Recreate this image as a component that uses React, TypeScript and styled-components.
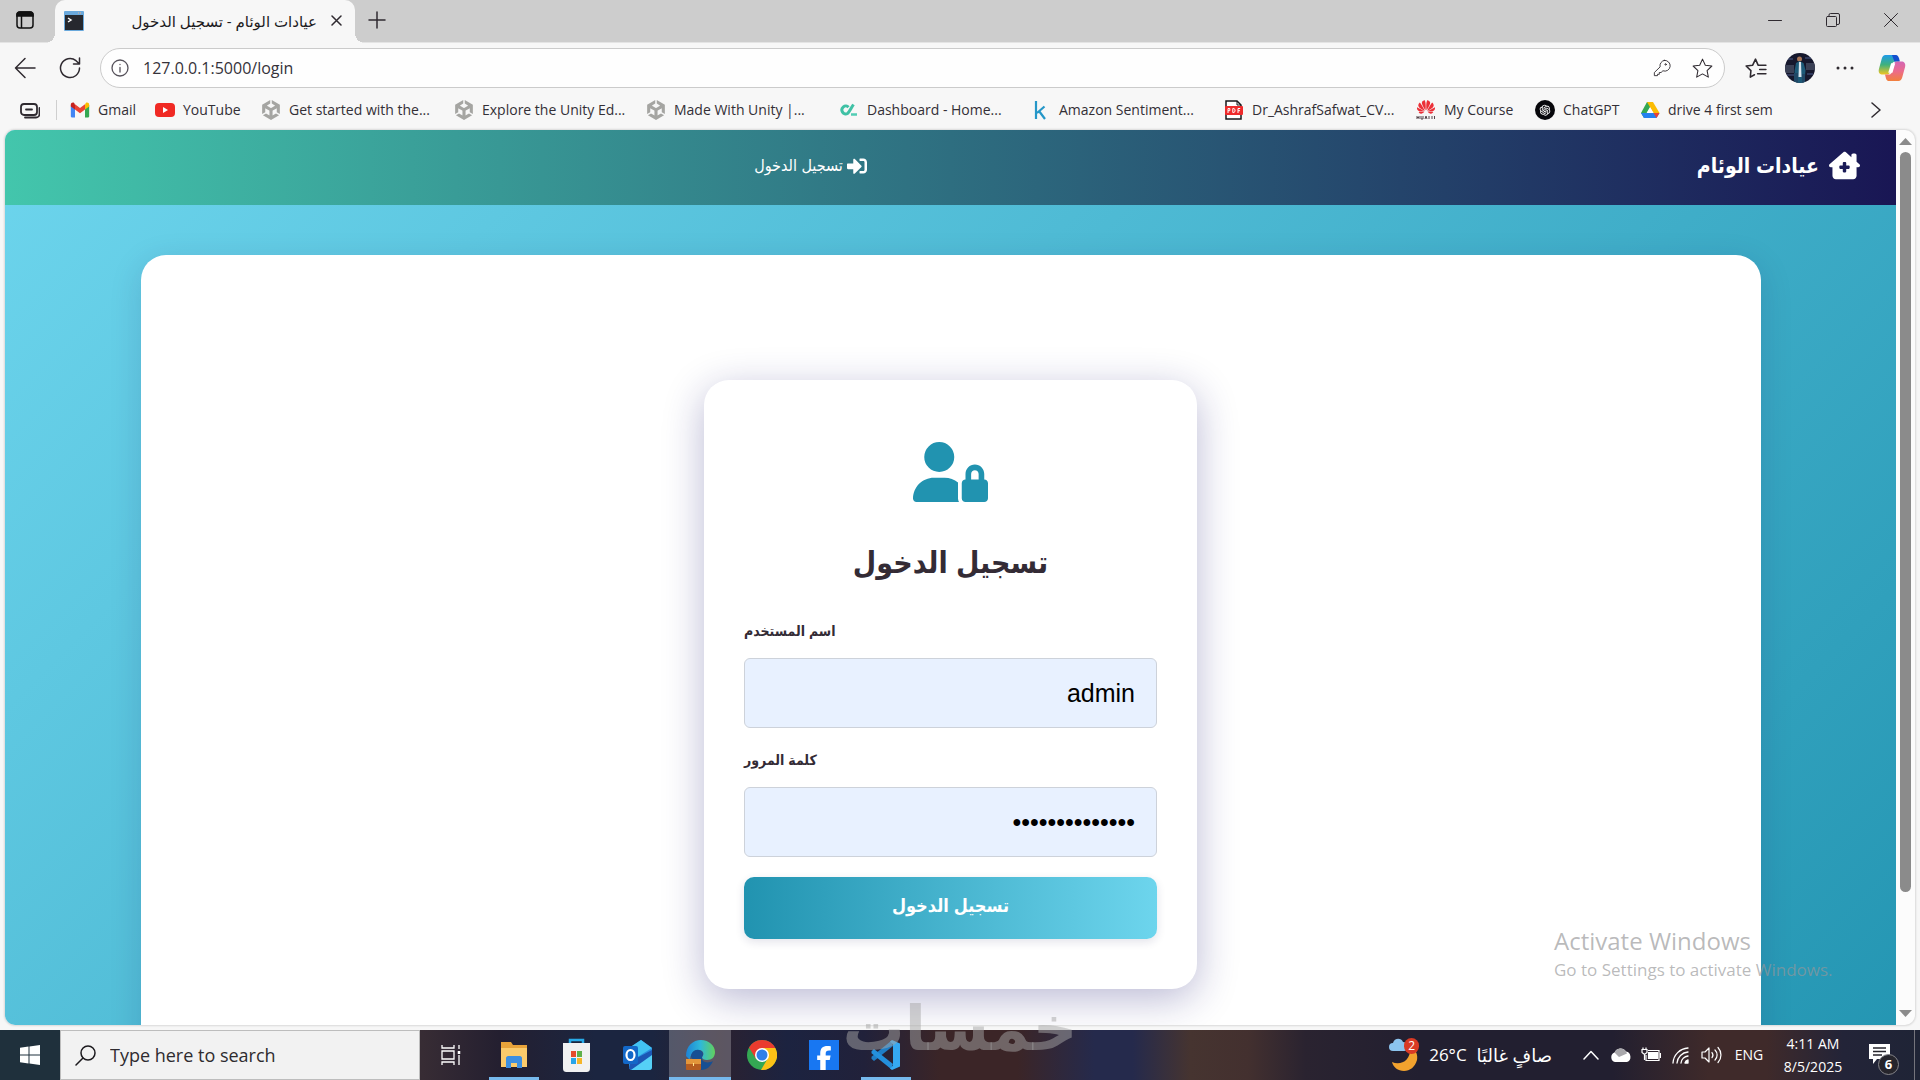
import React from 'react';
import styled, { createGlobalStyle, css } from 'styled-components';
import { FaUserLock, FaHouseChimneyMedical, FaFacebookF } from 'react-icons/fa6';
import { FaSignInAlt } from 'react-icons/fa';
import { SiUnity, SiHuawei } from 'react-icons/si';
import { AiOutlineOpenAI } from 'react-icons/ai';

const uiFont = '"Open Sans", "DejaVu Sans", sans-serif';
const pageFont = '"Liberation Sans", "DejaVu Sans Condensed", "DejaVu Sans", sans-serif';

const GlobalStyle = createGlobalStyle`
  *, *::before, *::after { box-sizing: border-box; }
  html, body { margin: 0; padding: 0; }
  body { overflow: hidden; background: #f7f7f7; font-family: ${uiFont}; }
  button, input { font: inherit; }
  svg { display: block; flex: none; }
`;

const Desktop = styled.div`
  position: relative;
  display: flex;
  flex-direction: column;
  height: 100vh;
  overflow: hidden;
  background: #f7f7f7;
`;

const IconButton = styled.button<{ $w?: number }>`
  display: flex;
  align-items: center;
  justify-content: center;
  flex: none;
  width: ${(p) => p.$w ?? 40}px;
  height: 40px;
  padding: 0;
  border: 0;
  background: transparent;
  color: #2f2a30;
`;

/* ---------- Tab strip ---------- */

const TabStrip = styled.header`
  display: flex;
  align-items: stretch;
  flex: none;
  height: 43px;
  padding-left: 5px;
  background: #cdcdcd;
  border-bottom: 1px solid #e4e4e4;
`;

const Tab = styled.div`
  position: relative;
  display: flex;
  align-items: center;
  width: 300px;
  height: 43px;
  margin-left: 10px;
  padding: 0 0 2px 9px;
  background: #f7f7f7;
  border-radius: 10px 10px 0 0;
  &::before, &::after {
    content: '';
    position: absolute;
    bottom: 0;
    width: 10px;
    height: 10px;
  }
  &::before { left: -10px; background: radial-gradient(circle at 0 0, transparent 10px, #f7f7f7 10px); }
  &::after { right: -10px; background: radial-gradient(circle at 100% 0, transparent 10px, #f7f7f7 10px); }
`;

const TabTitle = styled.span`
  flex: 1;
  font-size: 15px;
  line-height: 20px;
  text-align: right;
  white-space: nowrap;
  color: #1d1b1e;
`;

const WindowControls = styled.div`
  display: flex;
  margin-left: auto;
`;

/* ---------- Toolbar ---------- */

const Toolbar = styled.div`
  display: flex;
  align-items: center;
  flex: none;
  height: 50px;
  padding: 0 2px 0 5px;
`;

const AddressBar = styled.label`
  display: flex;
  align-items: center;
  flex: 1;
  height: 40px;
  margin: 0 9px 0 5px;
  padding: 0 2px 0 10px;
  border: 1px solid #cbcbcb;
  border-radius: 20px;
  background: #fefefe;
  color: #55515a;
`;

const AddressInput = styled.input`
  flex: 1;
  min-width: 0;
  margin-left: 14px;
  padding: 0;
  border: 0;
  outline: 0;
  background: transparent;
  font-size: 16px;
  line-height: 24px;
  color: #35323a;
`;

const Avatar = styled.span`
  display: block;
  width: 30px;
  height: 30px;
  border-radius: 50%;
  overflow: hidden;
`;

/* ---------- Bookmarks ---------- */

const BookmarkBar = styled.nav`
  display: flex;
  align-items: center;
  flex: none;
  height: 37px;
  padding: 0 20px 3px 10px;
`;

const Divider = styled.span`
  width: 1px;
  height: 20px;
  margin: 0 13px 0 6px;
  background: #cfcfcf;
`;

const Bookmark = styled.a<{ $w: number }>`
  display: flex;
  align-items: center;
  gap: 8px;
  flex: none;
  width: ${(p) => p.$w}px;
  font-size: 14px;
  line-height: 20px;
  white-space: nowrap;
  color: #332f36;
  text-decoration: none;
`;

const MoreBookmarks = styled.div`
  margin-left: auto;
`;

/* ---------- Web view ---------- */

const WebFrame = styled.div`
  display: flex;
  flex: 1;
  min-height: 0;
  margin: 0 5px 5px;
  border-radius: 10px;
  overflow: hidden;
  background: #fcfcfc;
  box-shadow: 0 0 2px 1px rgba(0, 0, 0, 0.12);
`;

const Viewport = styled.div`
  flex: 1;
  min-width: 0;
  overflow: hidden;
`;

const Page = styled.div`
  min-height: 100%;
  background: linear-gradient(135deg, #6dd5ed, #2193b0);
  font-family: ${pageFont};
`;

const SiteHeader = styled.header`
  display: grid;
  grid-template-columns: 1fr auto 1fr;
  align-items: center;
  direction: rtl;
  height: 75px;
  padding: 0 36px 4px;
  background: linear-gradient(90deg, #43c6ac, #191654);
  color: #fff;
`;

const Brand = styled.a`
  display: flex;
  align-items: center;
  gap: 10px;
  font-size: 21px;
  font-weight: 700;
  line-height: 32px;
  white-space: nowrap;
  color: #fff;
  text-decoration: none;
`;

const NavLinks = styled.nav`
  display: flex;
  padding-right: 280px;
`;

const NavLink = styled.a`
  display: flex;
  align-items: center;
  gap: 4px;
  font-size: 16px;
  line-height: 24px;
  white-space: nowrap;
  color: #fff;
  text-decoration: none;
`;

const Main = styled.main`
  padding: 50px 16px;
`;

const Panel = styled.section`
  display: flex;
  justify-content: center;
  max-width: 1620px;
  margin: 0 auto;
  padding: 125px 20px;
  border-radius: 25px;
  background: #fff;
  box-shadow: 0 8px 32px rgba(25, 22, 84, 0.15);
`;

const LoginCard = styled.form`
  display: flex;
  flex-direction: column;
  width: 493px;
  padding: 62px 40px 50px;
  border-radius: 25px;
  background: #fff;
  box-shadow: 0 10px 40px rgba(25, 22, 112, 0.3);
`;

const CardIcon = styled.div`
  display: flex;
  justify-content: center;
  color: #2193b0;
  svg { width: 75px; height: 60px; }
`;

const CardTitle = styled.h1`
  margin: 34px 0 29px;
  font-size: 30px;
  font-weight: 700;
  line-height: 54px;
  text-align: center;
  color: #332b35;
`;

const Field = styled.div`
  display: flex;
  flex-direction: column;
  gap: 15px;
  margin-bottom: 20px;
`;

const FieldLabel = styled.label`
  font-size: 14px;
  font-weight: 700;
  line-height: 24px;
  color: #332b35;
`;

const FieldInput = styled.input`
  width: 100%;
  height: 70px;
  padding: 16px 21px;
  border: 1px solid #cdd2da;
  border-radius: 6px;
  outline: 0;
  background: #e8f1ff;
  font-size: 25px;
  text-align: right;
  color: #000;
`;

const SubmitButton = styled.button`
  height: 62px;
  padding: 0 0 4px;
  border: 0;
  border-radius: 10px;
  background: linear-gradient(90deg, #2193b0, #6dd5ed);
  box-shadow: 0 3px 10px rgba(25, 22, 84, 0.12);
  font-size: 18px;
  font-weight: 700;
  color: #fff;
`;

const Scrollbar = styled.div`
  display: flex;
  flex-direction: column;
  align-items: center;
  flex: none;
  width: 19px;
  padding: 8px 0;
`;

const ScrollTrack = styled.div`
  flex: 1;
  width: 11px;
  margin: 7px 0;
`;

const ScrollThumb = styled.div`
  height: 87%;
  border-radius: 6px;
  background: #8b8b8b;
`;

const ScrollArrow = styled.button<{ $down?: boolean }>`
  width: 13px;
  height: 7px;
  padding: 0;
  border: 0;
  background: #8b8b8b;
  clip-path: ${(p) => (p.$down ? 'polygon(0 0, 100% 0, 50% 100%)' : 'polygon(50% 0, 100% 100%, 0 100%)')};
`;

/* ---------- Taskbar ---------- */

const Taskbar = styled.footer`
  display: flex;
  flex: none;
  height: 50px;
  background: linear-gradient(90deg, #1f303c 0%, #1f303c 3%, #372c34 22%, #241f30 26%, #1b2540 31%, #1b2540 34%, #2b2130 37.5%, #1c2340 41%, #21213a 45%, #3b2527 49%, #3b2527 53%, #252a4c 57%, #252a4c 59%, #463430 62%, #43302f 65%, #2a2330 68%, #221f30 74%, #221f30 84%, #3f2a2a 89%, #3f2a2a 92%, #232438 96%, #1f2436 100%);
  color: #fff;
`;

const StartButton = styled.button`
  display: flex;
  align-items: center;
  justify-content: center;
  width: 60px;
  padding: 0;
  border: 0;
  background: transparent;
`;

const SearchBox = styled.label`
  display: flex;
  align-items: center;
  gap: 14px;
  width: 360px;
  padding: 0 14px;
  border: 1px solid #bdbdbd;
  background: #f2f2f2;
  color: #1c1a1e;
`;

const SearchInput = styled.input`
  flex: 1;
  min-width: 0;
  padding: 0;
  border: 0;
  outline: 0;
  background: transparent;
  font-size: 18px;
  line-height: 26px;
  &::placeholder { color: #2e2b2f; opacity: 1; }
`;

const AppList = styled.div`
  display: flex;
  margin-left: 1px;
`;

const TaskButton = styled.button<{ $running?: boolean; $active?: boolean }>`
  display: flex;
  align-items: center;
  justify-content: center;
  position: relative;
  width: 62px;
  height: 50px;
  padding: 0;
  border: 0;
  background: ${(p) => (p.$active ? 'rgba(255,255,255,0.24)' : 'transparent')};
  ${(p) =>
    p.$running &&
    css`
      &::after {
        content: '';
        position: absolute;
        left: ${p.$active ? 0 : 6}px;
        right: ${p.$active ? 0 : 6}px;
        bottom: 0;
        height: 3px;
        background: #76b9ed;
      }
    `}
`;

const Tray = styled.div`
  display: flex;
  align-items: center;
  margin-left: auto;
`;

const Weather = styled.button`
  display: flex;
  align-items: center;
  gap: 10px;
  margin-right: 24px;
  padding: 0;
  border: 0;
  background: transparent;
  font-size: 17px;
  line-height: 24px;
  white-space: nowrap;
  color: #fff;
`;

const WeatherIcon = styled.span`
  position: relative;
`;

const WeatherBadge = styled.span`
  position: absolute;
  top: 0;
  right: 0;
  width: 15px;
  height: 16px;
  border-radius: 8px;
  background: #d93a25;
  font-size: 12px;
  line-height: 16px;
  text-align: center;
`;

const WeatherText = styled.span`
  font-size: 18px;
`;

const TrayButton = styled.button`
  display: flex;
  align-items: center;
  justify-content: center;
  width: 30px;
  height: 50px;
  padding: 0;
  border: 0;
  background: transparent;
  color: #fff;
`;

const Language = styled.span`
  width: 46px;
  font-size: 14px;
  line-height: 20px;
  text-align: center;
`;

const Clock = styled.time`
  width: 78px;
  margin-left: 2px;
  font-size: 14px;
  line-height: 23px;
  text-align: center;
`;

const NotifyButton = styled.button`
  position: relative;
  width: 62px;
  height: 50px;
  padding: 0;
  border: 0;
  background: transparent;
  color: #fff;
  svg { margin: 0 auto 2px 17px; }
`;

const NotifyCount = styled.span`
  position: absolute;
  left: 26px;
  top: 24px;
  width: 21px;
  height: 21px;
  border: 1px solid #85858a;
  border-radius: 50%;
  background: #26252c;
  font-size: 13px;
  font-weight: 700;
  line-height: 18px;
  text-align: center;
`;

const ShowDesktop = styled.button`
  width: 6px;
  height: 50px;
  padding: 0;
  border: 0;
  border-left: 1px solid #74747c;
  background: transparent;
`;

/* ---------- Overlays ---------- */

const Activation = styled.div`
  position: absolute;
  right: 82px;
  bottom: 98px;
  width: 284px;
  color: rgba(150, 150, 152, 0.66);
  white-space: nowrap;
  pointer-events: none;
`;

const ActivationTitle = styled.div`
  font-size: 24px;
  line-height: 34px;
`;

const ActivationText = styled.div`
  font-size: 17px;
  line-height: 24px;
`;

const Watermark = styled.div`
  position: absolute;
  left: 50%;
  bottom: 20px;
  transform: translateX(-50%);
  font-family: "DejaVu Sans", sans-serif;
  font-size: 62px;
  font-weight: 700;
  line-height: 62px;
  color: rgba(165, 165, 165, 0.5);
  pointer-events: none;
`;

/* ---------- Drawings ---------- */

type LineProps = { w: number; h?: number; box?: string; sw?: number; children: React.ReactNode };
const Line = ({ w, h, box = '0 0 24 24', sw = 1.5, children }: LineProps) => (
  <svg width={w} height={h ?? w} viewBox={box} fill="none" stroke="currentColor" strokeWidth={sw} strokeLinecap="round" strokeLinejoin="round">
    {children}
  </svg>
);

const TerminalIcon = () => (
  <svg width="20" height="20" viewBox="0 0 20 20">
    <rect width="20" height="20" rx="1" fill="#6aa9dc" />
    <rect x="1" y="4" width="18" height="15" fill="#26282e" />
    <path d="M14 2h1M16 2h1" stroke="#e9b08c" />
    <path d="M4 7l3 2-3 2" fill="none" stroke="#fff" strokeWidth="1.5" />
  </svg>
);

const GmailIcon = () => (
  <svg width="20" height="20" viewBox="0 0 24 24">
    <path d="M1 6v13.5c0 .8.7 1.5 1.500 1.500H6V9.500z" fill="#4285f4" />
    <path d="M23 6v13.500c0 .8-.7 1.500-1.500 1.500H18V9.500z" fill="#34a853" />
    <path d="M18 5.500v6l5-3.800V5.700c0-2.200-2.400-3.300-4-2z" fill="#fbbc04" />
    <path d="M1 5.700v2l5 3.800v-6L5 3.700C3.400 2.400 1 3.500 1 5.700z" fill="#c5221f" />
    <path d="M6 5.200v6.300l6 4.500 6-4.500V5.200L12 9.700z" fill="#ea4335" />
  </svg>
);

const YouTubeIcon = () => (
  <svg width="20" height="20" viewBox="0 0 20 20">
    <rect y="3" width="20" height="14" rx="4" fill="#f02a24" />
    <path d="M8 7l5 3-5 3z" fill="#fff" />
  </svg>
);

const UnityIcon = () => <SiUnity size={20} color="#a5a5a2" />;

const CampIcon = () => (
  <svg width="20" height="20" viewBox="0 0 20 20" fill="none" stroke="#3fc1a5" strokeWidth="3">
    <path d="M9.500 7.200A3.800 4 0 1 0 8.500 13.500C10.500 12 12 8 14.500 4.500" />
    <path d="M12 14.500h6" stroke="#52cdb4" strokeWidth="2.500" />
  </svg>
);

const KaggleIcon = () => (
  <svg width="20" height="20" viewBox="0 0 20 20" fill="none" stroke="#2597c8" strokeWidth="2.200">
    <path d="M5 1v18M13.500 6.500L6 13M8 11l6 8" />
  </svg>
);

const PdfIcon = () => (
  <svg width="20" height="20" viewBox="0 0 20 20">
    <path d="M2 1h11l4 4v14H2z" fill="#fff" stroke="#17171a" strokeWidth="1.500" />
    <path d="M13 1v4h4" fill="none" stroke="#17171a" />
    <rect x="1" y="6" width="18" height="9" rx="1" fill="#ee2a2b" />
    <path d="M4 13V8.500h1.800v2.200H4M8.800 8.500v4h1l1.200-1v-2l-1.200-1zM14 13V8.500h2.200M14 10.700h2" fill="none" stroke="#fff" />
  </svg>
);

const HuaweiIcon = () => (
  <svg width="20" height="20" viewBox="0 0 20 20">
    <g transform="translate(1 -2)"><SiHuawei size={18} color="#ec3038" /></g>
    <path d="M1 16v3M3 16v3M1 17.500h2M5 16v3h2v-3M9 19l1-3 1 3M13 16v3M16 16v3M18.500 16v3" fill="none" stroke="#55454a" />
  </svg>
);

const GptIcon = () => (
  <svg width="20" height="20" viewBox="0 0 20 20">
    <circle cx="10" cy="10" r="10" fill="#08080c" />
    <AiOutlineOpenAI x="3" y="3" size={14} color="#fff" />
  </svg>
);

const DriveIcon = () => (
  <svg width="20" height="20" viewBox="0 0 20 20">
    <path d="M7 2h6L4 18 1 13z" fill="#34a853" />
    <path d="M7 2h6l6.500 11h-6z" fill="#fbbc04" />
    <path d="M1 13h18.500l-3 5H4z" fill="#2580f0" />
    <path d="M13.500 13h6l-3 5z" fill="#ea4335" />
    <path d="M10 7.200L13.400 13H6.600z" fill="#fff" />
  </svg>
);

const Portrait = () => (
  <svg width="30" height="30" viewBox="0 0 30 30">
    <rect width="30" height="30" fill="#16182d" />
    <path d="M0 12h9v8H0zM21 10h9v7h-9z" fill="#3b4156" />
    <path d="M3 6h5M20 5h6M2 22h7M22 21h6" stroke="#4a5a8a" />
    <circle cx="14.500" cy="6" r="2.500" fill="#a87556" />
    <path d="M11 10l3.500-2 4 2 2 7-1 13h-9l-1-12z" fill="#1d5a78" />
    <path d="M14 9h2l.5 15h-3z" fill="#dce5ee" />
    <path d="M9 30V20h4v10zM17 30v-9h3v9z" fill="#204866" />
  </svg>
);

const CopilotIcon = () => (
  <svg width="28" height="30" viewBox="0 0 30 30">
    <defs>
      <linearGradient id="cpA" x1="0" y1="0" x2="0" y2="1">
        <stop offset="0" stopColor="#1e9bea" />
        <stop offset=".5" stopColor="#3fb17c" />
        <stop offset="1" stopColor="#f2c521" />
      </linearGradient>
      <linearGradient id="cpB" x1="0" y1="0" x2="0" y2="1">
        <stop offset="0" stopColor="#d266b4" />
        <stop offset=".5" stopColor="#ec6b8c" />
        <stop offset="1" stopColor="#f2803b" />
      </linearGradient>
    </defs>
    <path d="M8 1h10c2 0 3 1 3.500 3l1 4h-4c-2 0-3 1-3.500 3l-2 8c-.6 2-1.600 3-3.500 3H5c-3 0-5-2-4-6L4 5c.6-2.500 2-4 4-4z" fill="url(#cpA)" />
    <path d="M15 1h4c2 0 3 2 3.500 3.500l1 3.500h-6z" fill="#1450cf" />
    <path d="M22 29H12c-2 0-3-1-3.500-3l-1-4h4c2 0 3-1 3.500-3l2-8c.6-2 1.600-3 3.500-3H25c3 0 5 2 4 6l-3 11c-.6 2.500-2 4-4 4z" fill="url(#cpB)" />
    <path d="M14 10h4.500l-3 10H11z" fill="#fff" />
  </svg>
);

const ExplorerIcon = () => (
  <svg width="28" height="28" viewBox="0 0 28 28">
    <path d="M1 1h10l2 3h14v22H1z" fill="#e8a33a" />
    <path d="M1 7h26v19H1z" fill="#fbcb6b" />
    <path d="M6 27V17c0-1 1-2 2-2h12c1 0 2 1 2 2v10h-5v-5h-6v5z" fill="#3d8fe0" />
  </svg>
);

const StoreIcon = () => (
  <svg width="29" height="34" viewBox="0 0 29 34">
    <path d="M8 8V2h13v6" fill="none" stroke="#28aae8" strokeWidth="2.500" />
    <path d="M1 5h27v25c0 3-1 4-4 4H5c-3 0-4-1-4-4z" fill="#f1f1f1" />
    <path d="M9 13h5v6H9z" fill="#e64b2c" /><path d="M15 13h5v6h-5z" fill="#5fb04a" />
    <path d="M9 20h5v6H9z" fill="#28a4e8" /><path d="M15 20h5v6h-5z" fill="#f5b528" />
  </svg>
);

const OutlookIcon = () => (
  <svg width="30" height="32" viewBox="0 0 30 32">
    <path d="M18 1l11 8v19c0 2-1 3-3 3H9c-2 0-3-1-3-3V9z" fill="#2b8fe0" />
    <path d="M18 1l11 8-18 11-5-4V9z" fill="#42c3f2" />
    <path d="M29 11v8L8 31l-2-2 2-7z" fill="#1c57b5" />
    <path d="M29 16v12c0 2-1 3-3 3H8z" fill="#55d0f6" />
    <rect y="7" width="15" height="18" rx="2" fill="#1368c8" />
    <ellipse cx="7.500" cy="16" rx="4" ry="5" fill="none" stroke="#fff" strokeWidth="2.200" />
  </svg>
);

const EdgeIcon = () => (
  <svg width="31" height="32" viewBox="0 0 31 32">
    <defs>
      <linearGradient id="edge" x1="0" y1="0" x2="1" y2="0">
        <stop offset="0" stopColor="#1d83d6" /><stop offset=".5" stopColor="#2fb8d8" /><stop offset="1" stopColor="#62d15c" />
      </linearGradient>
    </defs>
    <path d="M1 17C1 7 8 1 16 1s14 6 14 12c0 5-3 8-8 8-3 0-5-1-5-3 3-3 1-7-3-7-6 0-9 5-9 10z" fill="url(#edge)" />
    <path d="M6 18c0-5 4-8 8-7 4 1 5 4 3 7-1 5 5 7 11 4-2 5-6 9-12 9z" fill="#174f93" />
    <rect x="1" y="20" width="15" height="11" rx="1" fill="#b55d20" />
    <path d="M1 20h15v5H1z" fill="#e3963a" /><path d="M8 24h1v3H8z" fill="#ffe28a" />
  </svg>
);

const ChromeIcon = () => (
  <svg width="30" height="34" viewBox="0 0 30 30">
    <circle cx="15" cy="15" r="15" fill="#34a853" />
    <path d="M15 8h13.300A15 15 0 0 1 14 30l7-12z" fill="#fbc116" />
    <path d="M2 7.500L9 19l6-11 13.300 0A15 15 0 0 0 2 7.500z" fill="#ea3b2e" />
    <circle cx="15" cy="15" r="7" fill="#fff" />
    <circle cx="15" cy="15" r="5.500" fill="#2f7fe8" />
  </svg>
);

const FacebookIcon = () => (
  <svg width="30" height="30" viewBox="0 0 30 30">
    <rect width="30" height="30" fill="#1877f2" />
    <FaFacebookF x="3" y="6" size={24} color="#fff" />
  </svg>
);

const CodeIcon = () => (
  <svg width="30" height="30" viewBox="0 0 30 30">
    <path d="M22 6L3 21l-2.500-2.200v-2L20 1z" fill="#1f7ec6" />
    <path d="M22 24L3 9 .5 11.200v2L20 29z" fill="#2490dc" />
    <path d="M21 0l8 3.500v23L21 30l-2-1.500 3-3v-21l-3-3z" fill="#35a9f2" />
  </svg>
);

const WeatherArt = () => (
  <svg width="31" height="34" viewBox="0 0 31 34">
    <path d="M25 10c3 3 5 7 4 12-2 7-7 11-13 11S5 29 4 24c8 4 19-1 18-14z" fill="#f2a22e" />
    <path d="M5 13a4 4 0 0 1 0-8c1-5 8-6 10-1 4 0 5 3 5 5s-2 4-4 4z" fill="#8cc4ee" />
  </svg>
);

const CloudTray = () => (
  <svg width="22" height="16" viewBox="0 0 22 16">
    <path d="M5 15a5 5 0 0 1-.5-9.500A6.500 6.500 0 0 1 16 4.500 5.500 5.500 0 0 1 17 15z" fill="#fff" />
    <path d="M4.500 5.500A6.500 6.500 0 0 1 16 4.500l1 2L9 10z" fill="#a9a8ac" />
  </svg>
);

const bookmarks = [
  { label: 'Gmail', w: 85, Icon: GmailIcon },
  { label: 'YouTube', w: 106, Icon: YouTubeIcon },
  { label: 'Get started with the...', w: 193, Icon: UnityIcon },
  { label: 'Explore the Unity Ed...', w: 192, Icon: UnityIcon },
  { label: 'Made With Unity |...', w: 193, Icon: UnityIcon },
  { label: 'Dashboard - Home...', w: 192, Icon: CampIcon },
  { label: 'Amazon Sentiment...', w: 193, Icon: KaggleIcon },
  { label: 'Dr_AshrafSafwat_CV...', w: 192, Icon: PdfIcon },
  { label: 'My Course', w: 119, Icon: HuaweiIcon },
  { label: 'ChatGPT', w: 105, Icon: GptIcon },
  { label: 'drive 4 first sem', w: 140, Icon: DriveIcon },
];

const apps = [
  { label: 'File Explorer', Icon: ExplorerIcon, running: true },
  { label: 'Microsoft Store', Icon: StoreIcon },
  { label: 'Outlook', Icon: OutlookIcon },
  { label: 'Microsoft Edge', Icon: EdgeIcon, running: true, active: true },
  { label: 'Chrome', Icon: ChromeIcon },
  { label: 'Facebook', Icon: FacebookIcon },
  { label: 'Visual Studio Code', Icon: CodeIcon, running: true },
];

const STAR = 'M12 3l2.700 5.800 6.300.8-4.600 4.400 1.200 6.300L12 17.200l-5.600 3.100L7.600 14 3 9.600l6.300-.8z';

export default function App() {
  return (
    <Desktop>
      <GlobalStyle />
      <TabStrip>
        <IconButton aria-label="Tab actions">
          <svg width="18" height="18" viewBox="0 0 18 18" fill="none" stroke="#111" strokeWidth="1.500">
            <rect x="1" y="1" width="16" height="16" rx="3" />
            <path d="M1 3.500a2.500 2.500 0 0 1 2.500-2.500h11A2.500 2.500 0 0 1 17 3.500V5H1z" fill="#111" />
            <path d="M5.500 5v12" />
          </svg>
        </IconButton>
        <Tab>
          <TerminalIcon />
          <TabTitle dir="rtl">عيادات الوئام - تسجيل الدخول</TabTitle>
          <IconButton $w={38} aria-label="Close tab">
            <Line w={11} box="0 0 11 11"><path d="M1 1l9 9M10 1l-9 9" /></Line>
          </IconButton>
        </Tab>
        <IconButton $w={44} aria-label="New tab">
          <Line w={18} box="0 0 18 18"><path d="M9 1v16M1 9h16" /></Line>
        </IconButton>
        <WindowControls>
          <IconButton $w={58} aria-label="Minimize">
            <Line w={14} box="0 0 14 14" sw={1}><path d="M.5 7.500h13" /></Line>
          </IconButton>
          <IconButton $w={58} aria-label="Restore">
            <Line w={14} box="0 0 14 14" sw={1}><rect x=".5" y="3.500" width="10" height="10" rx="1" /><path d="M3 3V2a1.500 1.500 0 0 1 1.500-1.500H12A1.500 1.500 0 0 1 13.500 2v8A1.500 1.500 0 0 1 12 11.500h-1" /></Line>
          </IconButton>
          <IconButton $w={58} aria-label="Close">
            <Line w={14} box="0 0 14 14" sw={1}><path d="M.5.500l13 13M13.500.500l-13 13" /></Line>
          </IconButton>
        </WindowControls>
      </TabStrip>

      <Toolbar>
        <IconButton aria-label="Back">
          <Line w={22} box="0 0 22 22"><path d="M21 11H1.500M11 1.500L1.500 11l9.500 9.500" /></Line>
        </IconButton>
        <IconButton $w={50} aria-label="Refresh">
          <Line w={22} box="0 0 22 22"><path d="M20.500 11A9.500 9.500 0 1 1 17 3.700L20 6.500M20.500 1v6H14.500" /></Line>
        </IconButton>
        <AddressBar>
          <Line w={18} box="0 0 18 18" sw={1.3}><circle cx="9" cy="9" r="8" /><path d="M9 8.500V13M9 5.500v.1" /></Line>
          <AddressInput aria-label="Address" defaultValue="127.0.0.1:5000/login" />
          <IconButton aria-label="Saved password">
            <Line w={18} box="0 0 20 20" sw={1}>
              <path d="M12.500 1.500a6 6 0 1 1-1.500 11.600L9 15H7v2H5v1.500H1.500V15l6.400-6.200A6 6 0 0 1 12.500 1.500z" /><circle cx="14" cy="6" r=".8" />
            </Line>
          </IconButton>
          <IconButton aria-label="Add to favorites"><Line w={25} sw={1}><path d={STAR} /></Line></IconButton>
        </AddressBar>
        <IconButton $w={42} aria-label="Favorites">
          <Line w={25}><path d="M7 20.300L7.600 14 3 9.600l6.300-.8L12 3l2.500 5.800M14.500 8.800H22M16 13h6M14 17h8M7 20.300L11 18" /></Line>
        </IconButton>
        <IconButton $w={48} aria-label="Profile"><Avatar><Portrait /></Avatar></IconButton>
        <IconButton $w={42} aria-label="Settings and more">
          <svg width="18" height="4" viewBox="0 0 18 4" fill="currentColor"><circle cx="2" cy="2" r="1.500" /><circle cx="9" cy="2" r="1.500" /><circle cx="16" cy="2" r="1.500" /></svg>
        </IconButton>
        <IconButton $w={52} aria-label="Copilot"><CopilotIcon /></IconButton>
      </Toolbar>

      <BookmarkBar>
        <IconButton aria-label="Workspaces">
          <Line w={20} box="0 0 20 20" sw={1.800}><rect x="1" y="4" width="16" height="11" rx="3" /><path d="M6 9.500h6M5 17.500h11a3.500 3.500 0 0 0 3.500-3.500V8" /></Line>
        </IconButton>
        <Divider />
        {bookmarks.map(({ label, w, Icon }) => (
          <Bookmark key={label} href="#" $w={w}><Icon />{label}</Bookmark>
        ))}
        <MoreBookmarks>
          <IconButton $w={48} aria-label="More bookmarks">
            <Line w={16} box="0 0 16 16"><path d="M4 1l8 7-8 7" /></Line>
          </IconButton>
        </MoreBookmarks>
      </BookmarkBar>

      <WebFrame>
        <Viewport>
          <Page>
            <SiteHeader>
              <Brand href="#"><FaHouseChimneyMedical size={31} />عيادات الوئام</Brand>
              <NavLinks>
                <NavLink href="#"><FaSignInAlt size={20} />تسجيل الدخول</NavLink>
              </NavLinks>
            </SiteHeader>
            <Main>
              <Panel>
                <LoginCard onSubmit={(e) => e.preventDefault()}>
                  <CardIcon><FaUserLock /></CardIcon>
                  <CardTitle dir="rtl">تسجيل الدخول</CardTitle>
                  <Field>
                    <FieldLabel htmlFor="username">اسم المستخدم</FieldLabel>
                    <FieldInput id="username" type="text" defaultValue="admin" />
                  </Field>
                  <Field>
                    <FieldLabel htmlFor="password">كلمة المرور</FieldLabel>
                    <FieldInput id="password" type="password" defaultValue="admin123456789" />
                  </Field>
                  <SubmitButton type="submit">تسجيل الدخول</SubmitButton>
                </LoginCard>
              </Panel>
            </Main>
          </Page>
        </Viewport>
        <Scrollbar>
          <ScrollArrow aria-label="Scroll up" />
          <ScrollTrack><ScrollThumb /></ScrollTrack>
          <ScrollArrow $down aria-label="Scroll down" />
        </Scrollbar>
      </WebFrame>

      <Taskbar>
        <StartButton aria-label="Start">
          <svg width="20" height="20" viewBox="0 0 20 20" fill="#fff"><path d="M0 2.800l8.500-1.200v8H0zM9.500 1.500L20 0v9.600H9.500zM0 10.500h8.500v8L0 17.300zM9.500 10.500H20V20L9.500 18.500z" /></svg>
        </StartButton>
        <SearchBox>
          <Line w={21} box="0 0 21 21"><circle cx="13" cy="8" r="7" /><path d="M8 13l-7 7" /></Line>
          <SearchInput aria-label="Search" placeholder="Type here to search" />
        </SearchBox>
        <TaskButton aria-label="Task view">
          <svg width="20" height="20" viewBox="0 0 20 20" fill="none" stroke="#fff" strokeWidth="1.300"><path d="M1 0v3h12V0M1 6h12v8H1zM1 20v-3h12v3M18 0v4M18 10v10" /><path d="M18 6v3" strokeWidth="2.500" /></svg>
        </TaskButton>
        <AppList>
          {apps.map(({ label, Icon, running, active }) => (
            <TaskButton key={label} aria-label={label} $running={running} $active={active}><Icon /></TaskButton>
          ))}
        </AppList>
        <Tray>
          <Weather>
            <WeatherIcon><WeatherArt /><WeatherBadge>2</WeatherBadge></WeatherIcon>
            <span>26°C</span>
            <WeatherText dir="rtl">صافٍ غالبًا</WeatherText>
          </Weather>
          <TrayButton aria-label="Show hidden icons"><Line w={16} h={10} box="0 0 16 10"><path d="M1 9l7-7.500L15 9" /></Line></TrayButton>
          <TrayButton aria-label="OneDrive"><CloudTray /></TrayButton>
          <TrayButton aria-label="Battery">
            <svg width="20" height="16" viewBox="0 0 20 16" fill="none" stroke="#fff" strokeWidth="1.200"><path d="M7 3.500h11v10H5V8M19.500 6v5" /><path d="M7.500 5.500h9v6h-9z" fill="#fff" /><path d="M1 2.500h5v3L3.500 7.500 1 5.500zM2 .5v2M5 .5v2M3.500 7v6" /></svg>
          </TrayButton>
          <TrayButton aria-label="Network">
            <Line w={18} h={18} box="0 0 18 18" sw={1.300}><path d="M1 17A16 16 0 0 1 16 2M5 17A12 12 0 0 1 16 6M9 17a8 8 0 0 1 7-7" /><path d="M13 17a4 4 0 0 1 3-3v3z" fill="#fff" /></Line>
          </TrayButton>
          <TrayButton aria-label="Volume">
            <Line w={21} h={18} box="0 0 21 18" sw={1.200}><path d="M1 6h3l4-4v14l-4-4H1zM11 6.500a4 4 0 0 1 0 5M14 4a7 7 0 0 1 0 10M17 1.500a11 11 0 0 1 0 15" /></Line>
          </TrayButton>
          <Language>ENG</Language>
          <Clock>4:11 AM<br />8/5/2025</Clock>
          <NotifyButton aria-label="Notifications">
            <svg width="21" height="22" viewBox="0 0 21 22"><path d="M0 1h21v15H8l-4 5v-5H0z" fill="#fff" /><path d="M4 5h13M4 8.500h13M4 12h9" stroke="#26252c" strokeWidth="1.300" /></svg>
            <NotifyCount>6</NotifyCount>
          </NotifyButton>
          <ShowDesktop aria-label="Show desktop" />
        </Tray>
      </Taskbar>

      <Activation>
        <ActivationTitle>Activate Windows</ActivationTitle>
        <ActivationText>Go to Settings to activate Windows.</ActivationText>
      </Activation>
      <Watermark dir="rtl">خمسات</Watermark>
    </Desktop>
  );
}
